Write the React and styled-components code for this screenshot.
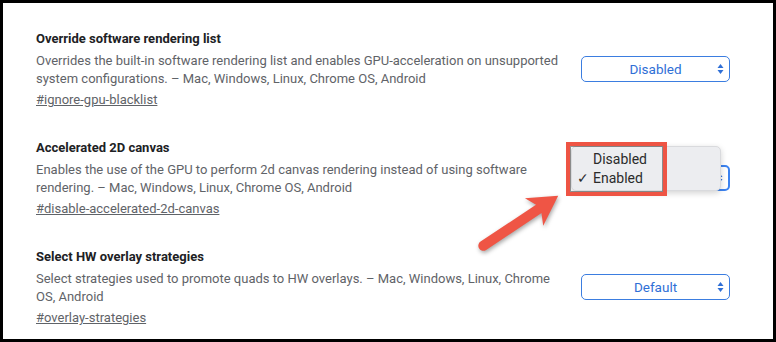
import React from 'react';
import styled, { createGlobalStyle } from 'styled-components';

const GlobalStyle = createGlobalStyle`
  html, body {
    margin: 0;
    padding: 0;
    background: #fff;
  }
`;

const Frame = styled.div`
  position: relative;
  width: 776px;
  height: 342px;
  box-sizing: border-box;
  border: 3px solid #000;
  background: #fff;
  padding: 26px 43px 0 33px;
  display: flex;
  flex-direction: column;
  gap: 28px;
  font-family: Roboto, "Liberation Sans", Arial, sans-serif;
  overflow: hidden;
`;

const Experiment = styled.div`
  display: grid;
  grid-template-columns: 530px 1fr;
  align-items: center;
`;

const TextBlock = styled.div`
  display: flex;
  flex-direction: column;
`;

const Title = styled.div`
  font-size: 13px;
  font-weight: 700;
  line-height: 20px;
  color: #202124;
  margin-bottom: 3px;
`;

const Description = styled.div`
  font-size: 13px;
  line-height: 18px;
  color: #5f6368;
  white-space: nowrap;
`;

const Permalink = styled.a`
  font-size: 13px;
  line-height: 20px;
  margin-top: 2px;
  color: #5f6368;
  text-decoration: underline;
  align-self: flex-start;
`;

const SelectWrap = styled.div`
  position: relative;
  justify-self: end;
  margin-top: -2px;
`;

const Select = styled.div`
  position: relative;
  width: 149px;
  height: 26px;
  box-sizing: border-box;
  border: ${p => (p.$focused ? '2px solid #3c83f0' : '1px solid #3b7de0')};
  border-radius: 5px;
  display: flex;
  align-items: center;
  justify-content: center;
  font-size: 13.5px;
  color: #2f6fd6;
  background: #fff;
`;

const Arrows = styled.svg`
  position: absolute;
  right: 5px;
  top: 50%;
  transform: translateY(-50%);
`;

const Popup = styled.div`
  position: absolute;
  left: -10px;
  top: -19px;
  width: 150px;
  height: 45px;
  box-sizing: border-box;
  background: #ecedf0;
  border: 1px solid #d9dadd;
  border-radius: 5px;
  box-shadow: 0 2px 6px rgba(0, 0, 0, 0.18);
  padding-top: 3px;
  font-size: 14px;
  color: #2b2b2b;
  z-index: 2;
`;

const Option = styled.div`
  position: relative;
  height: 19px;
  line-height: 19px;
  padding-left: 21px;
`;

const Check = styled.span`
  position: absolute;
  left: 5px;
  top: 0;
`;

const Highlight = styled.div`
  position: absolute;
  left: -15px;
  top: -23px;
  width: 101px;
  height: 54px;
  box-sizing: border-box;
  border: 4px solid #ee5444;
  box-shadow: inset 0 0 0 1px rgba(60, 60, 60, 0.55);
  z-index: 3;
`;

const Pointer = styled.svg`
  position: absolute;
  left: 452px;
  top: 178px;
  overflow: visible;
  filter: drop-shadow(1px 2px 2px rgba(0, 0, 0, 0.35));
  z-index: 4;
`;

const experiments = [
  {
    title: 'Override software rendering list',
    desc: [
      'Overrides the built-in software rendering list and enables GPU-acceleration on unsupported',
      'system configurations. – Mac, Windows, Linux, Chrome OS, Android',
    ],
    link: '#ignore-gpu-blacklist',
    value: 'Disabled',
  },
  {
    title: 'Accelerated 2D canvas',
    desc: [
      'Enables the use of the GPU to perform 2d canvas rendering instead of using software',
      'rendering. – Mac, Windows, Linux, Chrome OS, Android',
    ],
    link: '#disable-accelerated-2d-canvas',
    value: 'Enabled',
    open: true,
  },
  {
    title: 'Select HW overlay strategies',
    desc: [
      'Select strategies used to promote quads to HW overlays. – Mac, Windows, Linux, Chrome',
      'OS, Android',
    ],
    link: '#overlay-strategies',
    value: 'Default',
  },
];

function UpDown() {
  return (
    <Arrows width="7" height="12" viewBox="0 0 7 12">
      <path d="M3.5 1 L6.5 5 L0.5 5 Z" fill="#2f6fd6" />
      <path d="M3.5 11 L6.5 7 L0.5 7 Z" fill="#2f6fd6" />
    </Arrows>
  );
}

function App() {
  return (
    <>
      <GlobalStyle />
      <Frame>
        {experiments.map(exp => (
          <Experiment key={exp.link}>
            <TextBlock>
              <Title>{exp.title}</Title>
              {exp.desc.map(line => (
                <Description key={line}>{line}</Description>
              ))}
              <Permalink href={exp.link}>{exp.link}</Permalink>
            </TextBlock>
            <SelectWrap>
              <Select $focused={exp.open}>
                {exp.open ? '' : exp.value}
                <UpDown />
              </Select>
              {exp.open && (
                <>
                  <Popup>
                    <Option>Disabled</Option>
                    <Option><Check>✓</Check>Enabled</Option>
                  </Popup>
                  <Highlight />
                </>
              )}
            </SelectWrap>
          </Experiment>
        ))}
        <Pointer width="110" height="75" viewBox="0 0 110 75">
          <g transform="translate(25 67) rotate(-33.7)">
            <line x1="4" y1="0" x2="72" y2="0" stroke="#ef5545" strokeWidth="10" strokeLinecap="round" />
            <path d="M94 0 L65 -16.5 L71 -4 L71 4 L65 16.5 Z" fill="#ef5545" />
          </g>
        </Pointer>
      </Frame>
    </>
  );
}

export default App;
